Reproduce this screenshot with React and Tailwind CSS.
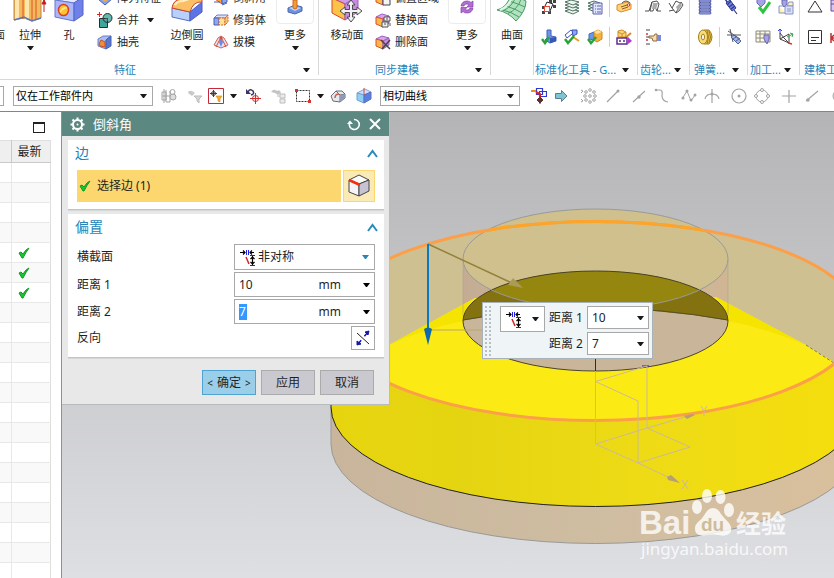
import React from "react";

const FONT = "font-['Noto_Sans','Noto_Sans_CJK_SC',sans-serif]";

function Svg({ w = 16, h = 16, children, className = "" }) {
  return (
    <svg width={w} height={h} viewBox={`0 0 ${w} ${h}`} fill="none" className={`block shrink-0 ${className}`} aria-hidden="true">
      {children}
    </svg>
  );
}

function Caret({ className = "text-[#1a1a1a]" }) {
  return (
    <Svg w={7} h={4} className={className}>
      <path d="M0 0H7L4 4H3Z" fill="currentColor" />
    </Svg>
  );
}

/* ---------- large ribbon icons ---------- */

const ExtrudeIcon = () => (
  <Svg w={34} h={32}>
    <path d="M1 2L10 5L19 2L28 4V28L19 31L11 28L1 30Z" fill="#f5b95a" stroke="#b8864a" />
    <path d="M4 4V29M14 5V29" stroke="#fde6ae" strokeWidth="4" />
    <path d="M10 4V29M19 3V31M23 3V29" stroke="#d8552c" />
    <path d="M1 30L11 27L19 31L28 28" stroke="#5f78b8" strokeWidth="1.5" />
    <path d="M31 22V9M29 14L31 10L33 14Z" stroke="#c41f1f" fill="#c41f1f" />
  </Svg>
);

const HoleIcon = () => (
  <Svg w={30} h={32}>
    <path d="M1 10L11 4L29 7L20 13Z" fill="#e4e8ff" stroke="#7484d8" />
    <path d="M1 10L20 13V31L1 27Z" fill="#a9b6fa" stroke="#6676d0" />
    <path d="M20 13L29 7V25L20 31Z" fill="#6f80ea" stroke="#5565c4" />
    <ellipse cx="9.5" cy="20" rx="5" ry="5.5" fill="#fbc52e" stroke="#e03b20" strokeWidth="1.5" />
    <path d="M6 22Q10 17 13 18" stroke="#fde98a" strokeWidth="1.5" />
  </Svg>
);

const EdgeBlendIcon = () => (
  <Svg w={32} h={32}>
    <path d="M1 18L19 22V31L1 27Z" fill="#b9d0fb" stroke="#5570c8" />
    <path d="M19 22L31 12V22L19 31Z" fill="#5f74e4" stroke="#4a5dc0" />
    <path d="M1 18Q2 10 10 9L22 4L31 7V12Q22 11 19 22Z" fill="#fbc066" stroke="#d2452a" />
    <path d="M4 15Q6 11 12 11L28 6" stroke="#fff0c4" strokeWidth="2" />
  </Svg>
);

const StampIcon = () => (
  <Svg w={16} h={16}>
    <path d="M1 9L8 6L15 8V12L8 15L1 13Z" fill="#6d92df" stroke="#4a66ad" />
    <path d="M2 9L8 7L14 9L8 12Z" fill="#bcd2fa" />
    <path d="M6 1H10V9Q8 11 6 9Z" fill="#f79a34" stroke="#cc6b1e" />
  </Svg>
);

const MoveFaceIcon = () => (
  <Svg w={32} h={34}>
    <path d="M1 10L14 3L27 8L14 16Z" fill="#cf9cec" stroke="#9b5fc0" />
    <path d="M1 10L14 16V32L1 25Z" fill="#fbc348" stroke="#d8492c" />
    <path d="M14 16L27 8V24L14 32Z" fill="#c78de2" stroke="#9b5fc0" />
    <path d="M20 12L24 17H21.5V21.500H26V19L31 23L26 27V24.5H21.5V29H24L20 34L16 29H18.5V24.5H14V27L9 23L14 19V21.5H18.5V17H16Z" fill="#f2f2f2" stroke="#4c4c4c" />
  </Svg>
);

const RefreshPurple = () => (
  <Svg w={16} h={16}>
    <path d="M2 7Q3 2 8 2Q11 2 12 3.5L14 2V8H8L10 5.5Q6 4 5 7Z" fill="#b46cd6" stroke="#7f43a4" strokeWidth=".7" />
    <path d="M14 9Q13 14 8 14Q5 14 4 12.5L2 14V8.5H8L6 10.5Q10 12 11 9Z" fill="#b46cd6" stroke="#7f43a4" strokeWidth=".7" />
  </Svg>
);

const SurfaceIcon = () => (
  <Svg w={32} h={30}>
    <path d="M1 18Q12 15 15 2L30 9Q30 19 20 29Q12 20 1 18Z" fill="#aee3bd" stroke="#4e9a68" />
    <path d="M5 17.5Q16 20 23 25M10 14Q20 17 26 21M13 9Q23 12 29 15M7 19Q17 14 20 4M12 21.5Q22 17 25 7" stroke="#4e9a68" />
    <path d="M4 18Q14 14 16 4" stroke="#dff7e5" strokeWidth="2" />
  </Svg>
);

/* ---------- small ribbon icons ---------- */

const PatternIcon = () => (
  <Svg>
    <path d="M1 9L8 5L15 9L8 15Z" fill="#86a3ee" stroke="#4560b5" />
    <path d="M4 9L8 7L12 9L8 12Z" fill="#f7a944" />
  </Svg>
);
const UniteIcon = () => (
  <Svg>
    <path d="M2.5 6.5H10.5V15.5H2.5Z" fill="#40a59a" stroke="#2c2c2c" />
    <circle cx="10.500" cy="6" r="4.5" fill="#40a59a" fillOpacity=".8" stroke="#2c2c2c" />
    <path d="M6.5 6.5H10.5V10.5" stroke="#2c2c2c" strokeDasharray="2 1" />
    <path d="M2.5 0V5M0 2.500H5" stroke="#e02828" />
  </Svg>
);
const ShellIcon = () => (
  <Svg>
    <path d="M1 5L6 2L14 2L9 6L9 15L1 12Z" fill="#a9bdf5" stroke="#6d7fc0" />
    <path d="M9 6L14 2V12L9 15Z" fill="#5975cd" stroke="#4560b5" />
    <path d="M2 10L4 6L8 8V13L3 12Z" fill="#ee8d3b" stroke="#c2522a" />
  </Svg>
);
const ChamferSmall = () => (
  <Svg>
    <path d="M2 2L9 6V14L2 9Z" fill="#f7a944" stroke="#e14d2f" />
    <path d="M9 6L14 3V12L9 14Z" fill="#8fa6f2" stroke="#4560b5" />
    <path d="M1 12H7M9 15L14 13" stroke="#4560b5" />
  </Svg>
);
const TrimBodyIcon = () => (
  <Svg>
    <path d="M1 6L4 3H15L12 6Z" fill="#dde4ff" stroke="#6d7fc0" />
    <path d="M1 6H6V13H1Z" fill="#8fa6f2" stroke="#4560b5" />
    <path d="M6 6H12V13H6Z" fill="#fbe29a" stroke="#d9602b" strokeDasharray="2 1" />
    <path d="M12 6L15 3V10L12 13Z" fill="#f5c666" stroke="#d9602b" strokeDasharray="2 1" />
  </Svg>
);
const DraftIcon = () => (
  <Svg>
    <path d="M1 11L5 4L8 2L11 4L15 11L8 14Z" fill="#dfe4fb" stroke="#d9604c" />
    <path d="M8 3L3 13M8 3L13 13" stroke="#d94a35" />
    <path d="M8 4L10 8L8 13L6 8Z" fill="#6e86dc" />
    <circle cx="8" cy="4" r="1.5" fill="#d94a35" />
  </Svg>
);
const FaceCube = ({ children }) => (
  <Svg>
    <path d="M1 5L7 2L14 4L8 7Z" fill="#d8a4ee" stroke="#9b5fc0" />
    <path d="M1 5L8 7V15L1 12Z" fill="#fbb946" stroke="#dc4f2e" />
    <path d="M8 7L14 4V11L8 15Z" fill="#c58ce2" stroke="#9b5fc0" />
    {children}
  </Svg>
);
const OffsetRegionIcon = () => (
  <FaceCube><path d="M8 8H12L15 10V15H8Z" fill="#f5f5f5" stroke="#444" /></FaceCube>
);
const ReplaceFaceIcon = () => (
  <FaceCube>
    <path d="M9 5H15V9H9ZM7 10H13V15H7Z" fill="#eee" stroke="#555" />
    <path d="M11 7H13M9 12H11M15 11V14" stroke="#555" />
  </FaceCube>
);
const DeleteFaceIcon = () => (
  <FaceCube><path d="M6 6L15 15M15 6L7 15" stroke="#474747" strokeWidth="1.5" /></FaceCube>
);

/* ---------- GC toolkit icons ---------- */

const NodesIcon = () => (
  <Svg>
    <path d="M3 9L6 3L12 5L9 12Z" stroke="#222" />
    {[[8, 1], [12, 1], [12, 6], [1, 7], [1, 12], [7, 12]].map(([x, y]) => <rect key={`${x}-${y}`} x={x} y={y} width="3" height="3" fill="#444" />)}
    <rect x="3.500" y="7.500" width="5" height="5" fill="#fff" stroke="#e84a35" />
  </Svg>
);
const LayersIcon = () => (
  <Svg>
    {[12, 9, 6, 3].map((y) => <path key={y} d={`M1 ${y}L7 ${y - 2}L15 ${y}L9 ${y + 3}Z`} fill="#eef6f0" stroke="#4f7464" />)}
  </Svg>
);
const LayerSheetIcon = () => (
  <Svg>
    {[10, 7, 4].map((y) => <path key={y} d={`M1 ${y}L7 ${y - 2}L13 ${y}L8 ${y + 3}Z`} fill="#eef6f0" stroke="#4f7464" />)}
    <path d="M6 4H15V15H6Z" fill="#e2e6ff" stroke="#5b62ac" />
    <path d="M8 7H9M10 7H14M8 10H9M10 10H14M8 13H9M10 13H14" stroke="#5b62ac" />
  </Svg>
);
const TagIcon = () => (
  <Svg>
    <path d="M1 6L11 3L15 5V10L5 13L1 11Z" fill="#ffd276" stroke="#d98d2b" />
    <path d="M5 8L11 6M6 10L12 8" stroke="#8c5a2a" />
    <circle cx="12.500" cy="6" r="1.2" fill="#fff" stroke="#c33" />
    <path d="M6 4Q10 0 14 4" stroke="#555" />
  </Svg>
);
const CheckPartIcon = () => (
  <Svg>
    <path d="M2 5L7 3V11L2 10Z" fill="#6d96ea" stroke="#4169c4" />
    <path d="M7 3L11 1L15 3V10L10 13L7 11Z" fill="#f3b13e" stroke="#c98a25" />
    <path d="M7 3L11 1L15 3L10 5Z" fill="#ffe09a" />
    <path d="M1 10L4 14L9 8" stroke="#2aa43a" strokeWidth="2.5" />
  </Svg>
);
const CheckBlueIcon = () => (
  <Svg>
    <path d="M6 1H10V7L15 8V12L9 14L4 11L6 9Z" fill="#6d96ea" stroke="#3f62b5" />
    <path d="M9 9L15 8V12L9 14Z" fill="#3558b8" />
    <path d="M1 10L4 14L8 8" stroke="#2aa43a" strokeWidth="2.5" />
  </Svg>
);
const CheckDrawIcon = () => (
  <Svg>
    <path d="M1 6L7 1L10 3L8 5L3 9Z" fill="#fff" stroke="#3f4fb5" />
    <path d="M8 1H13V5L9 7Z" fill="#8aa7f5" stroke="#3f4fb5" />
    <path d="M9 8L15 12" stroke="#e0a12c" strokeWidth="2" />
    <path d="M1 10L4 14L10 7" stroke="#2aa43a" strokeWidth="2.5" />
  </Svg>
);
const ExportIcon = () => (
  <Svg>
    <path d="M2 2L6 1L10 3V8H2Z" fill="#fcd57c" stroke="#cf8b25" />
    <path d="M2 3L6 5L10 3M6 5V8" stroke="#cf8b25" />
    <path d="M9 9L15 4" stroke="#d48c2c" strokeWidth="2" />
    <path d="M1 9H11V15H1Z" fill="#fff" stroke="#5e2b8d" strokeWidth="1.5" />
    <path d="M3 12H5M7 12H9" stroke="#5e2b8d" strokeWidth="1.5" />
    <path d="M12 8L16 12L12 15Z" fill="#b33ad0" />
  </Svg>
);
const Gear1 = () => (
  <Svg>
    <path d="M0 12H4L7 3L12 2L14 5L12 12H16M7 3L5 12L8 12L10 4M12 12L10 8" stroke="#505050" />
    <path d="M8 4H13L11 10H7Z" fill="#aaa" />
  </Svg>
);
const Gear2 = () => (
  <Svg>
    <path d="M1 4L4 9L8 2M4 9L8 14L13 3M1 12L6 11M8 2L12 4M13 3L15 6L11 12L8 14" stroke="#505050" />
    <path d="M8 8L12 4L14 6L10 12Z" fill="#aaa" />
  </Svg>
);
const HandIcon = () => (
  <Svg>
    <path d="M1 1H5M1 8H4M1 15H5" stroke="#444" />
    <path d="M1 5H3M1 11H3" stroke="#d33" strokeWidth="1.5" />
    <path d="M4 7H9L10 5H12V12H8L7 9H4Z" fill="#fbdcab" stroke="#8c6b44" />
    <path d="M12 6H16V12H12Z" fill="#7b8bdc" />
  </Svg>
);
const SpringIcon = () => (
  <Svg>
    <path d="M3 1V14M13 1V14" stroke="#2f3b94" />
    {[2, 5, 8, 11, 14].map((y) => <rect key={y} x="2" y={y - 1} width="12" height="2" rx="1" fill="#b9c1f4" stroke="#2f3b94" strokeWidth=".8" />)}
  </Svg>
);
const Spring2Icon = () => (
  <Svg>
    <path d="M2 0L5 4" stroke="#2f3b94" strokeWidth="1.5" />
    <path d="M3 4L7 1L13 9L9 12Z" fill="#7683d8" stroke="#2f3b94" />
    <path d="M4 6L8 2M6 8L10 5M8 10L12 7M11 11L14 15" stroke="#2f3b94" strokeWidth="1.2" />
  </Svg>
);
const RollIcon = () => (
  <Svg>
    <path d="M7 1H12Q15 4 15 8Q15 12 12 15H7Z" fill="#e6bf48" stroke="#a67d1c" />
    <path d="M10 1Q13 8 10 15M12 2Q15 8 12 14" stroke="#a67d1c" />
    <ellipse cx="6" cy="8" rx="4.5" ry="7" fill="#f6dc7a" stroke="#a67d1c" />
    <ellipse cx="6" cy="8" rx="1.5" ry="3" fill="#fff" stroke="#a67d1c" />
  </Svg>
);
const CutSpringIcon = () => (
  <Svg>
    <path d="M2 2L14 10M4 0L7 13M1 6L15 6" stroke="#555" />
    <path d="M5 8L8 6L15 12L12 15Z" fill="#a8b6e8" stroke="#4c5f9e" />
    <path d="M7 10L10 8M10 12L13 10" stroke="#4c5f9e" />
  </Svg>
);
const CheckMachineIcon = () => (
  <Svg>
    <path d="M2 0H10V4L6 8L2 4Z" fill="#a6a2e6" stroke="#6c68b4" />
    <path d="M4 8L8 13L15 3" stroke="#30c440" strokeWidth="3" />
  </Svg>
);
const TreeIcon = () => (
  <Svg>
    <path d="M4 1H9V5L6 8L4 5Z" fill="#a6a2e6" stroke="#6c68b4" />
    <path d="M1 7H5M1 7V14H7M11 3H15V7H9Z" stroke="#8792c4" fill="#fff0b4" />
    <path d="M7 7H15V15H7Z" fill="#dbe3fb" stroke="#8792c4" />
    <path d="M9 10H13M9 12H13" stroke="#8792c4" />
  </Svg>
);
const SheetToolIcon = () => (
  <Svg>
    <path d="M1 2H15V13H1Z" fill="#fbf9e8" stroke="#8c8c78" />
    <path d="M1 5H15M1 9H15M5 2V13M10 2V13" stroke="#8c8c78" />
    <path d="M9 6H14V10L12 15L9 10Z" fill="#a6a2e6" stroke="#6c68b4" />
  </Svg>
);
const AxisMachineIcon = () => (
  <Svg>
    <path d="M2 4V10L11 14V5L2 10" stroke="#444" />
    <path d="M2 4L6 9L11 14" stroke="#444" />
    <path d="M2 0V4M0 2L2 0L4 2" stroke="#3a3fd0" />
    <path d="M9 8L15 5M12 4L15 5L14 8" stroke="#38a852" />
    <path d="M10 14L14 15" stroke="#d33" strokeWidth="1.5" />
  </Svg>
);
const TriangleIcon = () => <Svg><path d="M8 2L15 13H1Z" fill="#fff" stroke="#333" /></Svg>;
const NoteIcon = () => (
  <Svg><path d="M1.500 1.500H14.500V14.500H1.500Z" fill="#fff" stroke="#333" /><path d="M4 8.500H12M4 11.500H9" stroke="#333" /></Svg>
);
const GridPurple = () => <Svg><path d="M1 1H15V12H1ZM1 5H15M6 1V12" fill="#d9c9f2" stroke="#684a9a" /></Svg>;
const DimRed = () => <Svg><path d="M1 4V14M1 9H15M4 6L1 9L4 12" stroke="#b33" strokeWidth="1.5" /></Svg>;

/* ---------- selection toolbar icons ---------- */

const G = "#a3a3a3";
const TB = {
  assembly: (
    <Svg><path d="M1 4H5V12H1ZM5 2V14H9V3M1 8H9M3 1V15" stroke={G} /><circle cx="11.5" cy="4" r="2.5" stroke={G} /><circle cx="12" cy="9" r="3" fill="#ddd" stroke={G} /></Svg>
  ),
  filterGray: (
    <Svg><path d="M1 5Q1 2 5 3L8 5L5 8Z" fill="#c9c9c9" /><path d="M7 8H15L12 11V15L10 13V11Z" fill="#d6d6d6" stroke="#bbb" /></Svg>
  ),
  filter: (
    <Svg><path d="M.5 .5H15.5V15.5H.5Z" fill="#fff" stroke="#c4283a" /><circle cx="5.5" cy="5.5" r="2" stroke="#4b3434" /><path d="M5.5 2V9M2 5.5H9" stroke="#4b3434" /><path d="M8 8H14L12 11V14L10 13V11Z" fill="#f3ad2d" stroke="#d0861a" strokeWidth=".6" /></Svg>
  ),
  undoPick: (
    <Svg><path d="M3 4Q5 0 8 3Q10 6 6 7" stroke="#3b3564" strokeWidth="1.5" /><path d="M1 1V6H6Z" fill="#3b3564" /><circle cx="10.5" cy="10.5" r="3" stroke="#d22b2b" /><path d="M10.5 5V16M5 10.5H16" stroke="#d22b2b" /></Svg>
  ),
  chainGray: (
    <Svg><path d="M0 4Q3 0 6 3Q9 1 10 5L7 7L4 5Z" fill="#c4c4c4" /><path d="M9 6H14V10H9ZM9 11H14V15H9ZM6 8H9" fill="#ececec" stroke="#bcbcbc" /></Svg>
  ),
  marquee: (
    <Svg><path d="M1.5 2.5H14.5V13.5H1.5Z" stroke="#333" strokeDasharray="2 1" /><path d="M0 1H3V4H0ZM13 12H16V15H13Z" fill="#d23434" /></Svg>
  ),
  shadedCube: (
    <Svg><path d="M1 8L6 3H12L15 6V10L10 14L3 13Z" fill="#e7e9ef" stroke="#686c78" /><path d="M6 3L10 7V14M10 7L15 6" stroke="#686c78" /><path d="M10 7L15 6V10L10 14Z" fill="#8f9bb4" /><path d="M5 10Q5 6 9 6" stroke="#d65a4a" strokeWidth="1.5" /></Svg>
  ),
  blueCube: (
    <Svg><path d="M1 5L9 1L15 4L8 7Z" fill="#cfe2fb" stroke="#8aa2d4" /><path d="M1 5L8 7V15L1 12Z" fill="#8fd0f2" stroke="#6f9fd0" /><path d="M8 7L15 4V11L8 15Z" fill="#5b7fe0" stroke="#5570c8" /><path d="M8 0V7" stroke="#d24b4b" /></Svg>
  ),
  snap: (
    <Svg><path d="M5.500 .5H11.500V6.500H5.500ZM8.500 3.500H15.500V8.500H8.500Z" stroke="#2c38d6" strokeWidth="1.2" /><path d="M0 3H5" stroke="#f08c1c" strokeWidth="2" /><path d="M5 4L9 6V10" stroke="#d3202c" strokeWidth="2" /><path d="M9 9V16M6 12L9 9L12 12L9 15Z" fill="#5c3030" stroke="#5c3030" /></Svg>
  ),
  arrow: <Svg><path d="M1.500 5.500H7.500V2.500L13 8L7.500 13.500V10.500H1.500Z" fill="#7cc6d4" stroke="#5c7d92" /></Svg>,
  points: (
    <Svg>{[[9, 2], [9, 14], [4, 8], [14, 8], [5, 4], [13, 4], [5, 12], [13, 12], [9, 8]].map(([x, y]) => <circle key={`${x}-${y}`} cx={x} cy={y} r="1.300" stroke={G} />)}<path d="M0 2L2 3L0 5M0 11L2 13L0 14" stroke={G} /></Svg>
  ),
  line: <Svg><path d="M2 14L13 3" stroke={G} strokeWidth="1.2" /><circle cx="13" cy="3" r="1.5" fill={G} /></Svg>,
  mid: <Svg><path d="M2 14L14 3" stroke={G} strokeWidth="1.2" /><circle cx="8" cy="9" r="1.7" fill={G} /></Svg>,
  curve: <Svg><path d="M1 2H6Q9 2 8 8Q8 13 14 14" stroke={G} strokeWidth="1.2" /><circle cx="2" cy="2" r="1.3" fill={G} /></Svg>,
  spline: <Svg><path d="M1 11L6 3L10 13L14 7" stroke={G} /><circle cx="6" cy="3" r="1.5" fill={G} /><circle cx="2" cy="10" r="1.5" fill={G} /><circle cx="10" cy="12" r="1.5" fill={G} /><circle cx="14" cy="7" r="1.5" fill={G} /></Svg>,
  cross: <Svg><path d="M8 1V15M1 11Q2 6 8 6T15 11" stroke={G} strokeWidth="1.2" /><circle cx="8" cy="6" r="1.5" fill={G} /></Svg>,
  center: <Svg><circle cx="8" cy="8" r="7" stroke={G} strokeWidth="1.2" /><circle cx="8" cy="8" r="1.5" fill={G} /></Svg>,
  quad: <Svg><circle cx="8" cy="8" r="6" stroke={G} />{[[8, 2], [8, 14], [2, 8], [14, 8]].map(([x, y]) => <circle key={`${x}-${y}`} cx={x} cy={y} r="1.5" fill="#fff" stroke={G} />)}</Svg>,
  plus: <Svg><path d="M8 2V15M1 8H15" stroke={G} strokeWidth="1.2" /></Svg>,
  onCurve: <Svg><path d="M2 13L14 3" stroke={G} strokeWidth="1.2" /><circle cx="4" cy="12" r="1.7" fill={G} /></Svg>,
  sphere: <Svg><circle cx="8" cy="8" r="6" fill="#e4e4e4" stroke={G} /></Svg>,
};

/* ---------- ribbon parts ---------- */

function BigButton({ icon, label, width, caret, framed }) {
  return (
    <button type="button" className={`flex shrink-0 flex-col items-center ${width}`}>
      {framed ? (
        <span className="mb-[3px] flex h-[38px] w-full items-center justify-center rounded border border-[#ececec] pt-1">{icon}</span>
      ) : (
        <span className="mb-[5px] block">{icon}</span>
      )}
      <span className="h-4 text-[11px] leading-4 whitespace-nowrap">{label}</span>
      <span className="flex h-[10px] items-center">{caret && <Caret />}</span>
    </button>
  );
}

function SmallButton({ icon, label, caret }) {
  return (
    <button type="button" className="flex h-[22px] items-center gap-1 text-[11px] leading-4 whitespace-nowrap">
      {icon}
      {label}
      {caret && <span className="ml-1"><Caret /></span>}
    </button>
  );
}

function IconButton({ icon, name, className = "" }) {
  return (
    <button type="button" aria-label={name} className={`block shrink-0 ${className}`}>
      {icon}
    </button>
  );
}

function Group({ label, width, caret = true, labelClass = "flex-1 text-center", children, last }) {
  return (
    <>
      <section className={`flex h-full flex-col justify-end overflow-hidden ${width}`}>
        <div className="flex shrink-0 items-end">{children}</div>
        <div className="mt-2 flex h-[18px] shrink-0 items-center pr-2 text-[11px] leading-4 whitespace-nowrap text-[#2384b9]">
          <span className={labelClass}>{label}</span>
          {caret && label && <button type="button" aria-label={`${label} 选项`}><Caret /></button>}
        </div>
      </section>
      {!last && <div className="h-[75px] w-px shrink-0 bg-[#d9d9d9]" />}
    </>
  );
}

const Sep = ({ className = "" }) => <span className={`block h-5 w-px shrink-0 bg-[#d0d0d0] ${className}`} />;

function Ribbon() {
  return (
    <header className="flex h-20 shrink-0 overflow-hidden border-b border-[#d9d9d9] bg-white">
      <Group label="特征" width="w-[318px] shrink-0" labelClass="mr-[53px] flex-1 text-center">
        <div className="flex h-[26px] w-2 shrink-0 justify-end pr-[3px] text-[11px] leading-4">面</div>
        <BigButton icon={<ExtrudeIcon />} label="拉伸" width="w-11" caret />
        <BigButton icon={<HoleIcon />} label="孔" width="w-[34px]" />
        <div className="w-[79px] shrink-0 pl-[11px]">
          <SmallButton icon={<PatternIcon />} label="阵列特征" />
          <SmallButton icon={<UniteIcon />} label="合并" caret />
          <SmallButton icon={<ShellIcon />} label="抽壳" />
        </div>
        <BigButton icon={<EdgeBlendIcon />} label="边倒圆" width="w-11" caret />
        <div className="w-[67px] shrink-0 pl-1">
          <SmallButton icon={<ChamferSmall />} label="倒斜角" />
          <SmallButton icon={<TrimBodyIcon />} label="修剪体" />
          <SmallButton icon={<DraftIcon />} label="拔模" />
        </div>
        <BigButton icon={<StampIcon />} label="更多" width="w-[38px]" caret framed />
      </Group>
      <Group label="同步建模" width="w-[171px] shrink-0">
        <BigButton icon={<MoveFaceIcon />} label="移动面" width="w-14" />
        <div className="w-[73px] shrink-0">
          <SmallButton icon={<OffsetRegionIcon />} label="偏置区域" />
          <SmallButton icon={<ReplaceFaceIcon />} label="替换面" />
          <SmallButton icon={<DeleteFaceIcon />} label="删除面" />
        </div>
        <BigButton icon={<RefreshPurple />} label="更多" width="w-[38px]" caret framed />
      </Group>
      <Group label="" width="w-[42px] shrink-0">
        <BigButton icon={<SurfaceIcon />} label="曲面" width="w-[42px]" caret />
      </Group>
      <Group label="标准化工具 - G..." width="w-[103px] shrink-0" labelClass="flex-1 pl-px">
        <div className="flex flex-col gap-[14px] pb-2 pl-[7px]">
          <div className="flex h-4 items-center gap-[7px]">
            <IconButton icon={<NodesIcon />} name="属性" />
            <IconButton icon={<LayersIcon />} name="图层" />
            <IconButton icon={<LayerSheetIcon />} name="图层表" />
            <Sep className="-mx-px" />
            <IconButton icon={<TagIcon />} name="标签" />
          </div>
          <div className="flex h-4 items-center gap-[7px]">
            <IconButton icon={<CheckBlueIcon />} name="建模检查" />
            <IconButton icon={<CheckDrawIcon />} name="制图检查" />
            <IconButton icon={<CheckPartIcon />} name="装配检查" />
            <Sep className="-mx-px" />
            <IconButton icon={<ExportIcon />} name="导出" />
          </div>
        </div>
      </Group>
      <Group label="齿轮..." width="w-[51px] shrink-0" labelClass="flex-1 pl-[2px]">
        <div className="flex flex-col gap-[14px] pb-2 pl-[7px]">
          <div className="flex h-4 gap-[7px]">
            <IconButton icon={<Gear1 />} name="圆柱齿轮" />
            <IconButton icon={<Gear2 />} name="锥齿轮" />
          </div>
          <IconButton icon={<HandIcon />} name="显示齿轮" />
        </div>
      </Group>
      <Group label="弹簧..." width="w-[57px] shrink-0" labelClass="flex-1 pl-1">
        <div className="flex flex-col gap-[14px] pb-2 pl-[7px]">
          <div className="flex h-4 gap-[10px]">
            <IconButton icon={<SpringIcon />} name="压缩弹簧" />
            <IconButton icon={<Spring2Icon />} name="拉伸弹簧" />
          </div>
          <div className="flex h-4 items-center gap-[6px]">
            <IconButton icon={<RollIcon />} name="碟簧" />
            <Sep />
            <IconButton icon={<CutSpringIcon />} name="删除弹簧" />
          </div>
        </div>
      </Group>
      <Group label="加工..." width="w-[51px] shrink-0" labelClass="flex-1 pl-[2px]">
        <div className="flex flex-col gap-[14px] pb-2 pl-[7px]">
          <div className="flex h-4 gap-[7px]">
            <IconButton icon={<CheckMachineIcon />} name="加工检查" />
            <IconButton icon={<TreeIcon />} name="加工树" />
          </div>
          <div className="flex h-4 gap-[7px]">
            <IconButton icon={<SheetToolIcon />} name="刀具表" />
            <IconButton icon={<AxisMachineIcon />} name="加工坐标" />
          </div>
        </div>
      </Group>
      <Group label="建模工" width="min-w-0 flex-1" caret={false} labelClass="pl-1" last>
        <div className="flex flex-col gap-[14px] pb-2 pl-[7px]">
          <div className="flex h-4 gap-[7px]">
            <IconButton icon={<TriangleIcon />} name="三角形" />
            <IconButton icon={<GridPurple />} name="表格" />
          </div>
          <div className="flex h-4 gap-[7px]">
            <IconButton icon={<NoteIcon />} name="注释" />
            <IconButton icon={<DimRed />} name="尺寸" />
          </div>
        </div>
      </Group>
    </header>
  );
}

function ToolbarSelect({ value, name }) {
  return (
    <div className="relative h-5 w-[140px] shrink-0">
      <select aria-label={name} defaultValue={value} className="block h-5 w-full appearance-none border border-[#a8a8a8] bg-white pl-[2px] text-[11px] leading-4 text-black outline-none">
        <option>{value}</option>
      </select>
      <span className="pointer-events-none absolute top-2 right-[6px]"><Caret /></span>
    </div>
  );
}

function SelectionBar() {
  return (
    <div className="flex h-8 shrink-0 items-center overflow-hidden border-b border-[#7d8888] bg-white">
      <div className="mr-[9px] h-5 w-1 shrink-0 border-y border-r border-[#a8a8a8]" />
      <ToolbarSelect value="仅在工作部件内" name="选择范围" />
      <IconButton className="ml-2" icon={TB.assembly} name="装配" />
      <IconButton className="ml-[10px]" icon={TB.filterGray} name="重置过滤器" />
      <IconButton className="ml-[5px]" icon={TB.filter} name="过滤器" />
      <span className="ml-[6px]"><Caret /></span>
      <IconButton className="ml-2" icon={TB.undoPick} name="恢复选择" />
      <IconButton className="ml-[10px]" icon={TB.chainGray} name="链选择" />
      <IconButton className="ml-2" icon={TB.marquee} name="矩形选择" />
      <span className="ml-[6px]"><Caret /></span>
      <IconButton className="ml-[6px]" icon={TB.shadedCube} name="着色" />
      <IconButton className="ml-[10px]" icon={TB.blueCube} name="实体" />
      <div className="w-2 shrink-0" />
      <ToolbarSelect value="相切曲线" name="曲线规则" />
      <IconButton className="ml-[11px]" icon={TB.snap} name="捕捉" />
      <IconButton className="ml-[7px]" icon={TB.arrow} name="跟随" />
      <IconButton className="ml-[11px]" icon={TB.points} name="点" />
      <IconButton className="ml-2" icon={TB.line} name="端点" />
      <IconButton className="ml-[10px]" icon={TB.mid} name="中点" />
      <IconButton className="ml-[7px]" icon={TB.curve} name="控制点" />
      <IconButton className="ml-[11px]" icon={TB.spline} name="极点" />
      <IconButton className="ml-[7px]" icon={TB.cross} name="交点" />
      <IconButton className="ml-[11px]" icon={TB.center} name="圆心" />
      <IconButton className="ml-[7px]" icon={TB.quad} name="象限点" />
      <IconButton className="ml-[11px]" icon={TB.plus} name="现有点" />
      <IconButton className="ml-[7px]" icon={TB.onCurve} name="曲线上的点" />
      <IconButton className="ml-[11px]" icon={TB.sphere} name="面上的点" />
    </div>
  );
}

/* ---------- part navigator ---------- */

const GreenCheck = () => (
  <Svg w={12} h={12}>
    <path d="M1 6L3 5L5 7Q8 2 11 1Q8 5 5 11H4Z" fill="#16c62e" stroke="#119a24" strokeLinejoin="round" />
  </Svg>
);

function Navigator() {
  return (
    <aside className="w-[62px] shrink-0 overflow-hidden border-r border-[#8b9090] bg-white">
      <div className="flex h-7 items-start justify-end pt-[10px] pr-4">
        <button type="button" aria-label="最大化" className="h-[11px] w-3 border border-t-2 border-[#222]" />
      </div>
      <table className="w-[51px] table-fixed border-collapse border-t border-r border-[#dedede]">
        <thead>
          <tr className="h-[22px] bg-[#efefef]">
            <th className="w-[11px] border-r border-b border-[#c9c9c9] p-0" aria-label="名称" />
            <th className="border-b border-[#c9c9c9] p-0 pl-[6px] text-left text-[12px] leading-4 font-normal whitespace-nowrap">最新</th>
          </tr>
        </thead>
        <tbody>
          {Array.from({ length: 21 }, (_, i) => (
            <tr key={i} className="h-5 border-b border-[#e8e8e8] odd:bg-white even:bg-[#f9f9f9]">
              <td className="border-r border-[#e8e8e8] p-0" />
              <td className="p-0 pl-[6px]">{i >= 4 && i <= 6 && <GreenCheck />}</td>
            </tr>
          ))}
        </tbody>
      </table>
    </aside>
  );
}

/* ---------- dialog ---------- */

const AsymIcon = () => (
  <Svg w={17} h={17}>
    <path d="M0 3.500H5M10 3.500H14M3 1.500L5 3.500L3 5.500M12 1.500L10 3.500L12 5.500" stroke="#000" strokeWidth="1.2" />
    <path d="M6.5 1V6M8.5 1V6" stroke="#2020e0" />
    <path d="M10 6.5H15M10 16.5H15" stroke="#2020e0" />
    <path d="M12.5 7V16M10.5 10L12.5 8L14.5 10M10.5 13L12.5 15L14.5 13" stroke="#000" strokeWidth="1.2" />
    <path d="M6 8L9 15" stroke="#d42020" strokeWidth="1.5" />
  </Svg>
);

const Chevron = () => (
  <Svg w={11} h={9}><path d="M1 8L5.5 2L10 8" stroke="#2b8bb8" strokeWidth="2" /></Svg>
);

const EdgeCube = () => (
  <Svg w={24} h={24}>
    <path d="M2 6L12 1L22 6L12 10Z" fill="#fafafa" stroke="#444" />
    <path d="M2 6L12 10V22L2 18Z" fill="#f4f4f8" stroke="#444" />
    <path d="M12 10L22 6V17L12 22Z" fill="#c6c4d2" stroke="#444" />
    <path d="M2 6L13 11" stroke="#f0300e" strokeWidth="2.5" />
  </Svg>
);

function Section({ title, children }) {
  return (
    <section className="border-b border-[#c4c4c4] bg-white px-[9px] pb-[7px] shadow-[0_1px_0_#d6d6d6]">
      <div className="-mr-[3px] mb-1 -ml-[2px] flex h-[26px] items-center justify-between">
        <h2 className="text-[14px] leading-5 font-normal text-[#2384b9]">{title}</h2>
        <button type="button" aria-label={`收起${title}`}><Chevron /></button>
      </div>
      {children}
    </section>
  );
}

function DistanceRow({ id, label, value, selected }) {
  return (
    <div className="mb-[2px] flex items-center">
      <label htmlFor={id} className="flex-1 text-[12px] leading-4">{label}</label>
      <div className="flex h-[25px] w-[141px] items-center border border-[#a8a8a8] bg-white pr-1">
        <div className="flex min-w-0 flex-1 items-center pl-1">
          <input
            id={id}
            defaultValue={value}
            className={`h-4 p-0 text-[12px] leading-4 outline-none ${selected ? "w-2 bg-[#3399ff] text-white" : "w-16"}`}
          />
        </div>
        <span className="text-[12px] leading-4">mm</span>
        <button type="button" aria-label={`${label} 选项`} className="ml-[22px]"><Caret className="text-black" /></button>
      </div>
    </div>
  );
}

function ChamferDialog() {
  return (
    <form role="dialog" aria-label="倒斜角" className="absolute top-0 left-0 w-[328px] border-r border-b border-[#b9bcbe] bg-[#e8e8e8]" onSubmit={(e) => e.preventDefault()}>
      <div className="flex h-6 items-center bg-[#5c8882] px-2 text-white">
        <Svg w={15} h={15}>
          <circle cx="7.5" cy="7.5" r="4.5" stroke="#fff" strokeWidth="2" />
          <path d="M7.5 .5V3M7.5 12V14.5M.5 7.5H3M12 7.5H14.5M2.500 2.500L4 4M11 11L12.500 12.500M12.500 2.500L11 4M4 11L2.500 12.500" stroke="#fff" strokeWidth="2" />
          <circle cx="7.5" cy="7.5" r="1" fill="#fff" />
        </Svg>
        <h1 className="ml-2 flex-1 text-[13px] leading-5 font-normal">倒斜角</h1>
        <button type="button" aria-label="重置">
          <Svg w={14} h={13}>
            <path d="M7 1.5A5 5 0 1 1 2.5 5" stroke="#fff" strokeWidth="1.6" />
            <path d="M0 6L3 2.500L6 6Z" fill="#fff" />
          </Svg>
        </button>
        <button type="button" aria-label="关闭" className="ml-2">
          <Svg w={12} h={12}><path d="M1 1L11 11M11 1L1 11" stroke="#fff" strokeWidth="2" /></Svg>
        </button>
      </div>
      <div className="flex flex-col gap-1 pt-1 pr-[5px] pl-[6px]">
        <Section title="边">
          <div className="flex gap-[2px]">
            <div className="flex h-8 flex-1 items-center gap-1.5 bg-[#fcd66f] pl-[2px] text-[12px] leading-4">
              <GreenCheck />
              选择边 (1)
            </div>
            <button type="button" aria-label="边" className="flex size-8 items-center justify-center border border-[#fcd66f] bg-[#faeab6]"><EdgeCube /></button>
          </div>
        </Section>
        <Section title="偏置">
          <div className="mb-[2px] flex items-center">
            <label htmlFor="section-type" className="flex-1 text-[12px] leading-4">横截面</label>
            <div className="relative flex h-[26px] w-[141px] items-center border border-[#a8a8a8] bg-white pl-[5px]">
              <AsymIcon />
              <select id="section-type" className="h-full flex-1 appearance-none pl-px text-[12px] leading-4 outline-none">
                <option>非对称</option>
              </select>
              <span className="pointer-events-none absolute top-[10px] right-[5px]"><Caret className="text-[#2384b9]" /></span>
            </div>
          </div>
          <DistanceRow id="dist-1" label="距离 1" value="10" />
          <DistanceRow id="dist-2" label="距离 2" value="7" selected />
          <div className="flex h-6 items-center justify-between text-[12px] leading-4">
            <label htmlFor="reverse">反向</label>
            <button id="reverse" type="button" className="flex size-6 items-center justify-center border border-[#a8a8a8] bg-white">
              <Svg w={14} h={16}>
                <path d="M1 3L13 14" stroke="#222" />
                <path d="M2 14L12 2" stroke="#1616b0" strokeWidth="1.5" strokeDasharray="5 5" />
                <path d="M9 2L13 1L12 5ZM1 11V15L5 14Z" fill="#1616b0" stroke="#1616b0" />
              </Svg>
            </button>
          </div>
        </Section>
      </div>
      <div className="flex justify-end gap-[5px] pt-3 pr-[15px] pb-[9px] text-[12px] leading-4">
        <button type="submit" className="flex h-[25px] w-[54px] items-center justify-center gap-1 border border-[#4fa3d1] bg-[#9bcee8] whitespace-nowrap"><span className="text-[10px]">&lt;</span>确定<span className="text-[10px]">&gt;</span></button>
        <button type="button" className="h-[25px] w-[54px] border border-[#ababab] bg-[#c9c9cf]">应用</button>
        <button type="button" className="h-[25px] w-[54px] border border-[#ababab] bg-[#c9c9cf]">取消</button>
      </div>
    </form>
  );
}

/* ---------- on-screen input ---------- */

function MiniField({ id, label, value }) {
  return (
    <div className="flex items-center gap-[2px]">
      <label htmlFor={id} className="w-9 text-[12px] leading-4 whitespace-nowrap">{label}</label>
      <div className="flex h-[23px] w-[62px] items-center border border-[#a8a8a8] bg-white px-1">
        <input id={id} defaultValue={value} className="w-8 min-w-0 flex-1 p-0 text-[12px] leading-4 outline-none" />
        <button type="button" aria-label={`${label} 选项`}><Caret /></button>
      </div>
    </div>
  );
}

function MiniPanel() {
  return (
    <div className="absolute top-[190px] left-[420px] flex h-[57px] w-[171px] items-start border border-[#a9b2b6] bg-[#eff5f6] pt-[3px] pl-[2px]">
      <Svg w={7} h={52}>
        {Array.from({ length: 13 }, (_, i) => (
          <path key={i} d={`M0 ${i * 4}h2v2h-2zM4 ${i * 4}h2v2h-2z`} fill="#b9bfc2" />
        ))}
      </Svg>
      <button type="button" aria-label="横截面类型" className="ml-2 flex h-[26px] w-[45px] shrink-0 items-center justify-between border border-[#a8a8a8] bg-white px-[5px]">
        <AsymIcon />
        <Caret />
      </button>
      <div className="ml-1 flex flex-col gap-[3px]">
        <MiniField id="mini-1" label="距离 1" value="10" />
        <MiniField id="mini-2" label="距离 2" value="7" />
      </div>
    </div>
  );
}

/* ---------- 3D scene ---------- */

function Scene() {
  return (
    <svg viewBox="62 112 772 466" preserveAspectRatio="xMinYMin slice" className="absolute inset-0 h-full w-full" role="img" aria-label="模型视图">
      <defs>
        <linearGradient id="bg" x1="0" y1="0" x2="0" y2="1">
          <stop offset="0" stopColor="#b4b4b6" />
          <stop offset="1" stopColor="#dedfe2" />
        </linearGradient>
        <linearGradient id="side" x1="0" y1="0" x2="1" y2="0">
          <stop offset="0" stopColor="#e6d50e" />
          <stop offset=".25" stopColor="#e5d411" />
          <stop offset=".6" stopColor="#eedb16" />
          <stop offset="1" stopColor="#f5de0c" />
        </linearGradient>
        <linearGradient id="base" x1="0" y1="0" x2="1" y2="0">
          <stop offset="0" stopColor="#c8b59b" />
          <stop offset=".5" stopColor="#cfbda2" />
          <stop offset="1" stopColor="#dac09c" />
        </linearGradient>
        <linearGradient id="bore" x1="0" y1="0" x2="1" y2="0">
          <stop offset="0" stopColor="#c3ac93" />
          <stop offset=".5" stopColor="#cdbc98" />
          <stop offset="1" stopColor="#cfb593" />
        </linearGradient>
        <clipPath id="hole"><ellipse cx="595.5" cy="321" rx="132.5" ry="50" /></clipPath>
        <clipPath id="boreTop"><ellipse cx="595.5" cy="259" rx="132.5" ry="50" /></clipPath>
        <clipPath id="rim"><ellipse cx="595.5" cy="321" rx="264.5" ry="99.5" /></clipPath>
      </defs>
      <rect x="62" y="112" width="100%" height="100%" fill="url(#bg)" />

      <path d="M331 407V444A264.500 99.500 0 0 0 860 444V407Z" fill="url(#base)" stroke="#999" />
      <path d="M331 321V407A264.500 99.500 0 0 0 860 407V321Z" fill="url(#side)" />
      <path d="M331 321V407A264.500 99.500 0 0 0 860 407V321" stroke="#222" fill="none" />

      <ellipse cx="595.5" cy="321" rx="264.5" ry="99.5" fill="#cfc092" />
      <path d="M463 259V321A132.500 50 0 0 1 728 321V259Z" fill="url(#bore)" />
      <ellipse cx="595.5" cy="259" rx="132.5" ry="50" fill="#cfc08e" />
      <g clipPath="url(#rim)">
        <path d="M331 376L389 345L475 298L716 297L806 345L860 378V440H331Z" fill="#fcea14" />
        <path d="M389 345L475 298L463 321Q420 330 389 345ZM806 345L716 297L728 321Q765 328 806 345Z" fill="#f5e300" />
      </g>
      <path d="M806 345L834 363" stroke="#777" strokeDasharray="3 2" />

      <g clipPath="url(#hole)">
        <rect x="460" y="268" width="270" height="106" fill="#c9b59a" />
        <path d="M460 321Q595 296 731 321V260H460Z" fill="#83720f" />
        <g clipPath="url(#boreTop)"><rect x="460" y="268" width="270" height="50" fill="#95860f" /></g>
        <path d="M463 320Q595 296 728 320" stroke="#55502a" fill="none" />
      </g>
      <ellipse cx="595.5" cy="321" rx="132.5" ry="50" fill="none" stroke="#4a4428" />
      <ellipse cx="595.5" cy="259" rx="132.5" ry="50" fill="none" stroke="#9a9a98" />
      <path d="M463 259V315M728 259V315" stroke="#b0a290" strokeWidth=".6" />
      <ellipse cx="595.5" cy="321" rx="264.5" ry="99.5" fill="none" stroke="#fb9f48" strokeWidth="3" />
      <g clipPath="url(#boreTop)">
        <ellipse cx="595.5" cy="321" rx="264.5" ry="99.5" fill="none" stroke="#fba52c" strokeWidth="3" />
      </g>

      <path d="M428 330H482" stroke="#b5aa6a" />
      <path d="M428 244L512 283" stroke="#94813c" strokeWidth="1.5" />
      <path d="M508 285L513 278L523 288Z" fill="#ac9b54" />
      <path d="M428 244V330" stroke="#0b7bc1" strokeWidth="2" />
      <path d="M424 329Q428 326 432 329L428 345Z" fill="#0c6aad" />

      <path d="M595.5 358V371M642 366H649" stroke="#2418b4" />
      <g stroke="#ccb99a" fill="none">
        <path d="M595.5 371V444L638 463L690 447L647 428L595.5 444" />
        <path d="M638 463V401L595.5 381.5L647 366V428L690 415.5M638 463L672 479" />
        <path d="M701 406L704 411L707 406M704 411V416M682 480L688 489M688 480L682 489" />
      </g>
      <path d="M684 416L692 414L695 415L687 419ZM667 477L671 475L680 483L668 480Z" fill="#b3a077" />

      <g fill="#fff" fillOpacity=".8">
        <text x="639" y="534" fontSize="33" fontWeight="700" fontFamily="'Liberation Sans', sans-serif">Bai</text>
        <ellipse cx="697" cy="507" rx="5" ry="7" />
        <ellipse cx="707" cy="496" rx="5" ry="7" />
        <ellipse cx="720.5" cy="497" rx="5" ry="7" />
        <ellipse cx="729" cy="510" rx="5" ry="7" />
        <path d="M713 508Q718 508 721 514Q725 519 729 523Q733 529 730 533Q726 537 719 535Q713 534 707 535Q700 537 696 533Q693 527 698 522Q702 519 705 514Q708 508 713 508Z" />
        <text x="736" y="533" fontSize="25" fontWeight="700" fontFamily="'Noto Sans CJK SC', sans-serif">经验</text>
        <text x="641" y="555" fontSize="17" fontFamily="'Noto Sans', sans-serif">jingyan.baidu.com</text>
      </g>
      <text x="701" y="531" fontSize="19" fontWeight="700" fill="#cdbd9c" fontFamily="'Liberation Sans', sans-serif">du</text>
    </svg>
  );
}

export default function App() {
  return (
    <div className={`flex h-screen flex-col overflow-hidden bg-white text-[#1f1f1f] ${FONT}`}>
      <Ribbon />
      <SelectionBar />
      <div className="flex min-h-0 flex-1">
        <Navigator />
        <main className="relative min-w-0 flex-1 overflow-hidden">
          <Scene />
          <ChamferDialog />
          <MiniPanel />
        </main>
      </div>
    </div>
  );
}
